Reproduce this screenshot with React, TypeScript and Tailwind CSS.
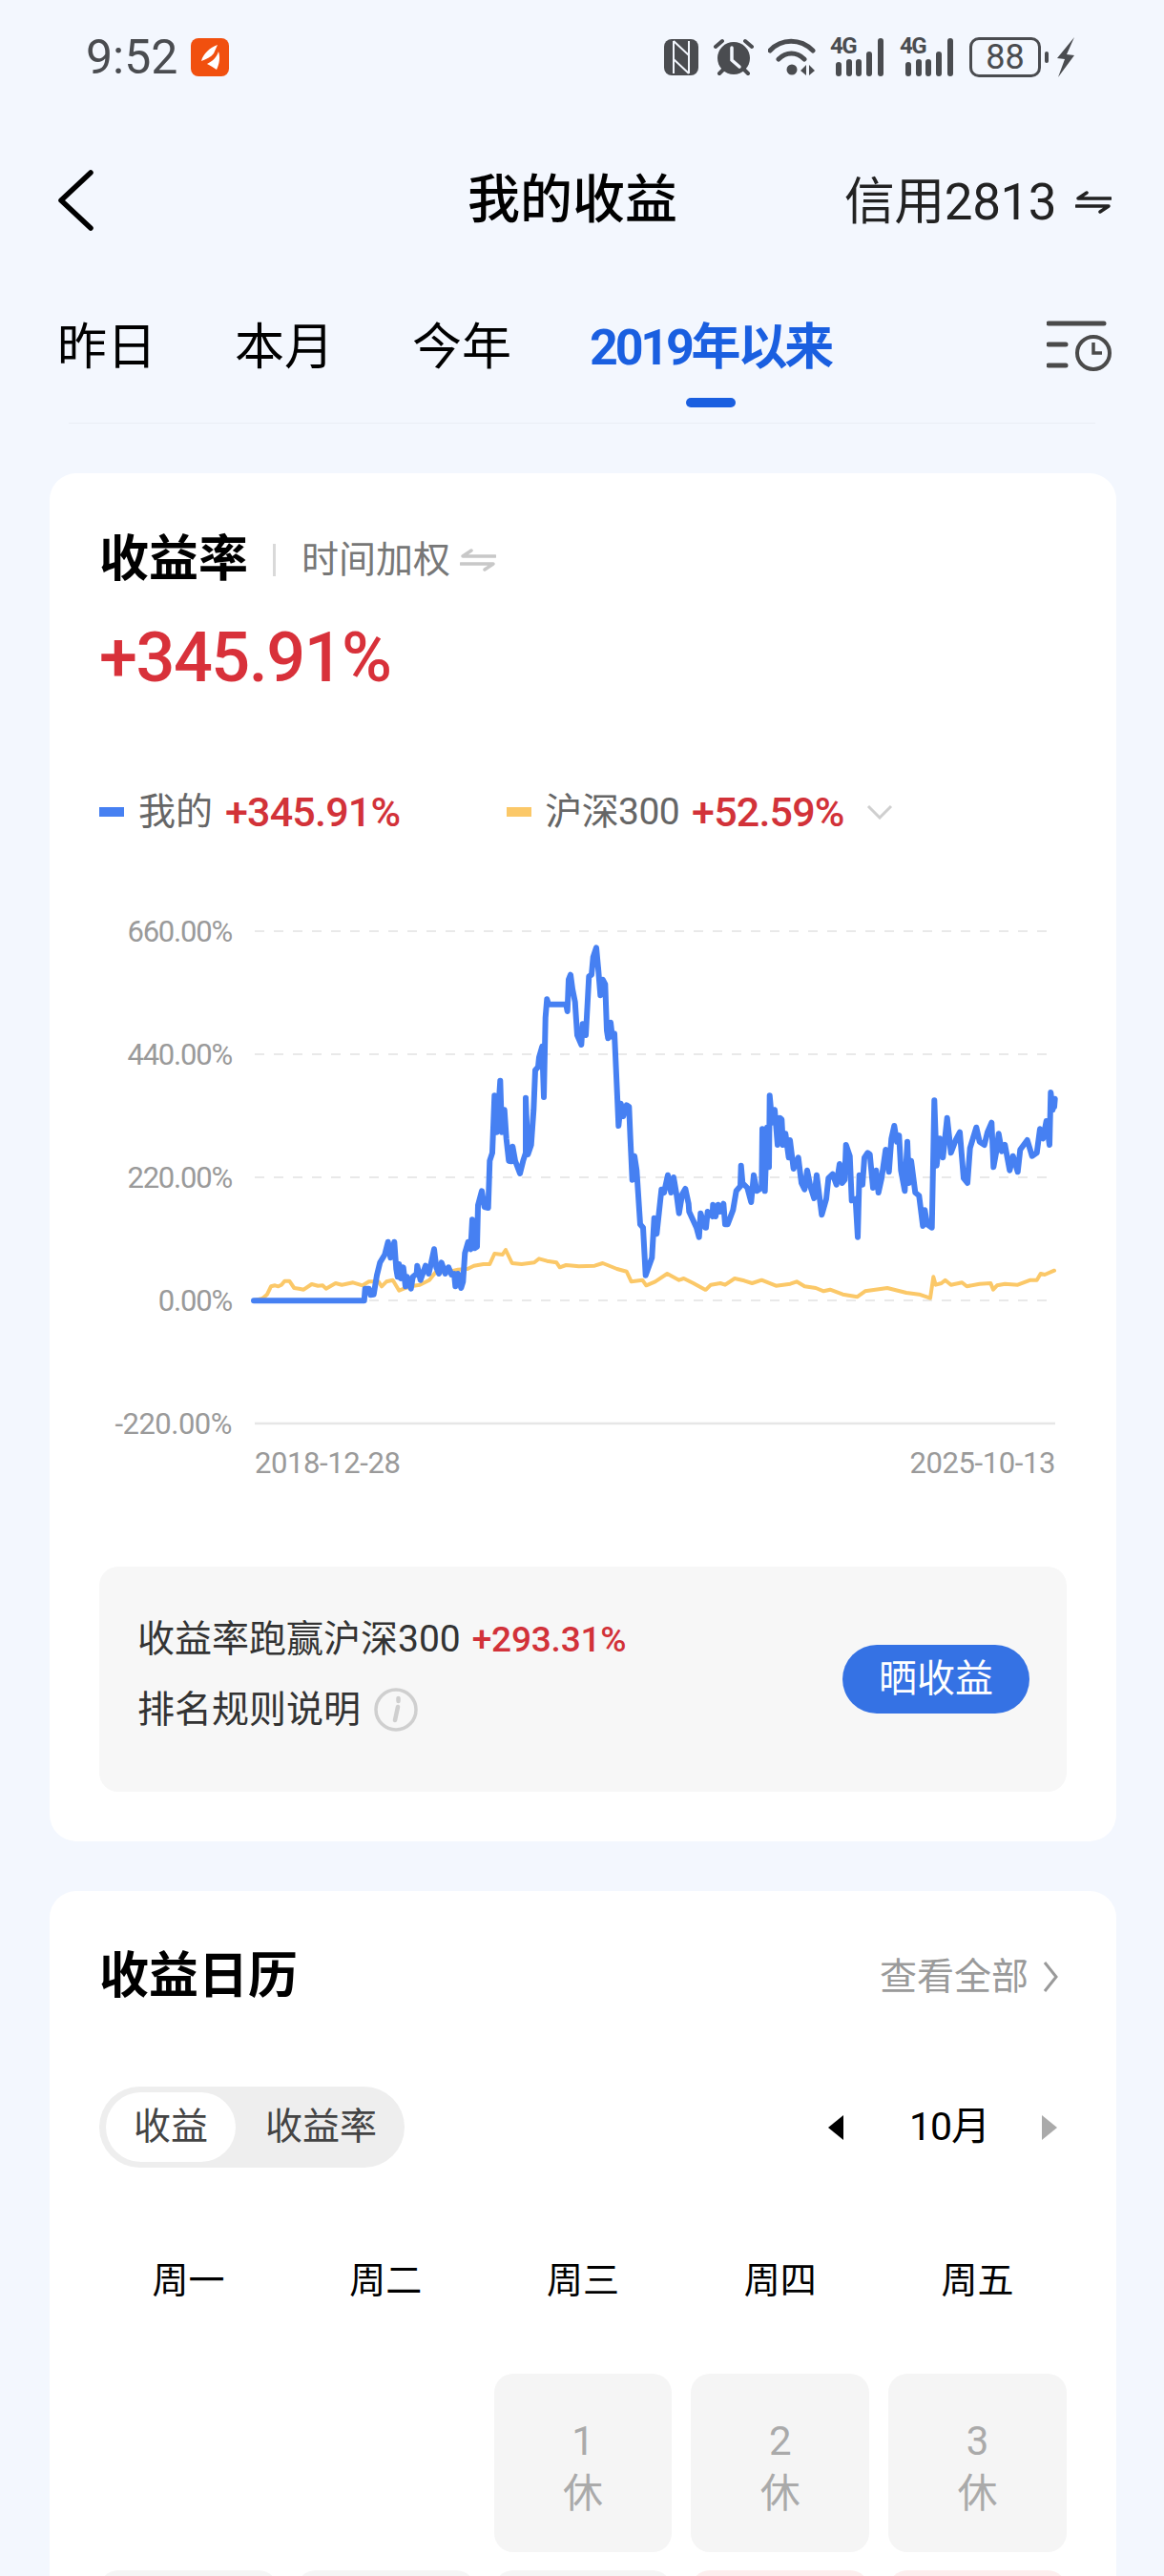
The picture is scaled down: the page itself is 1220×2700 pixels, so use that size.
import React from 'react';

// traced from the reference, [x, y] in crop pixels; see toPoints
const blueA = [[78,1210],[425,1210],[428,1172],[440,1172],[445,1192],[455,1190],[465,1130],[475,1090],[490,1065],[500,1025],[508,1075],[520,1025],[526,1110],[530,1135],[535,1095],[540,1140],[548,1105],[555,1165],[560,1135],[572,1172],[578,1135],[590,1125],[592,1100],[602,1145],[618,1100],[628,1125],[636,1090],[645,1048],[652,1105],[660,1125],[668,1090],[680,1125],[690,1105],[700,1128],[708,1125],[712,1165],[720,1125],[730,1170],[736,1150],[742,1060],[752,1025],[760,1048],[765,955],[772,1045],[780,1040],[783,910],[795,865],[803,915],[815,918],[820,770],[828,745],[835,565],[842,680],[853,518],[858,680],[866,610],[872,700],[880,770],[888,772],[892,725],[900,770],[915,810],[925,770],[933,745],[933,572],[940,750],[950,720],[958,610],[963,485],[972,475],[975,445],[985,410],[990,570],[995,320],[1000,262],[1005,278],[1060,278],[1064,300],[1068,200],[1074,185],[1080,230],[1088,270],[1095,375],[1108,405],[1112,340],[1122,375],[1132,190],[1140,185],[1145,130],[1155,100],[1162,175],[1168,250],[1175,200],[1183,215],[1188,360],[1192,385],[1200,335],[1205,380],[1212,370],[1215,435],[1222,590],[1225,660],[1232,590],[1240,630],[1250,595],[1258,600],[1262,700],[1268,830],[1275,755],[1282,800],[1293,970],[1302,980],[1310,1130],[1330,1075],[1337,950],[1345,1000],[1360,860],[1368,870],[1380,815],[1390,870],[1398,822],[1408,880],[1415,935],[1425,875],[1435,858],[1445,905],[1447,930],[1470,980],[1478,1010],[1483,935],[1497,980]];
const blueB = [[120,620],[125,570],[140,585],[142,548],[150,585],[158,548],[165,570],[175,545],[180,610],[188,610],[205,565],[215,505],[228,490],[230,425],[235,480],[250,495],[262,540],[270,455],[280,505],[295,495],[297,310],[305,505],[312,305],[318,430],[320,205],[328,290],[336,250],[345,360],[352,275],[358,280],[362,360],[370,325],[380,400],[384,345],[395,435],[410,400],[420,480],[430,500],[438,440],[448,490],[460,528],[468,455],[484,580],[498,530],[505,465],[518,452],[530,485],[540,420],[548,480],[556,470],[560,360],[572,395],[578,535],[590,530],[597,650],[602,455],[612,485],[618,400],[628,385],[635,390],[645,495],[655,440],[662,510],[672,465],[685,375],[695,445],[703,340],[712,300],[720,350],[727,330],[733,440],[745,505],[753,350],[758,480],[765,410],[778,510],[790,520],[802,615],[808,565],[815,610],[830,620],[838,220],[845,425],[855,340],[865,400],[878,275],[890,385],[905,345],[918,320],[930,465],[942,480],[950,370],[970,305],[980,350],[995,360],[1005,320],[1018,290],[1024,430],[1033,380],[1040,325],[1050,380],[1060,360],[1075,440],[1085,395],[1100,445],[1108,375],[1130,345],[1145,395],[1160,385],[1170,310],[1180,340],[1190,285],[1200,360],[1204,195],[1210,250],[1217,215],[1215,240]];
const orangeA = [[78,1210],[105,1203],[120,1190],[132,1165],[145,1162],[155,1165],[165,1160],[175,1148],[190,1148],[205,1170],[220,1172],[235,1175],[260,1158],[280,1163],[295,1162],[305,1172],[335,1155],[355,1160],[390,1153],[420,1162],[440,1150],[470,1150],[480,1165],[495,1150],[515,1145],[535,1178],[555,1170],[570,1165],[600,1160],[630,1145],[650,1120],[690,1120],[720,1112],[750,1110],[770,1100],[800,1095],[820,1095],[835,1062],[860,1065],[870,1050],[890,1092],[920,1095],[960,1090],[975,1078],[1000,1085],[1030,1090],[1040,1105],[1060,1098],[1085,1100],[1100,1102],[1150,1100],[1175,1092],[1220,1110],[1250,1118],[1265,1150],[1300,1145],[1312,1162],[1340,1150],[1378,1125],[1415,1145],[1430,1140],[1460,1155],[1497,1175]];
const orangeB = [[120,815],[135,800],[165,795],[180,800],[210,780],[240,787],[265,795],[295,785],[340,803],[385,797],[405,790],[430,805],[465,810],[490,820],[510,815],[550,830],[595,838],[620,820],[690,810],[750,825],[790,830],[825,842],[835,775],[842,800],[860,795],[872,785],[890,800],[925,793],[940,805],[980,797],[1015,795],[1023,815],[1035,802],[1060,797],[1100,800],[1140,785],[1160,785],[1172,765],[1185,768],[1215,755]];

const toPoints = (a: number[][], b: number[][]) =>
    [
        ...a.map(([x, y]) => [240 + x / 3, 960 + y / 3]),
        ...b.map(([x, y]) => [700 + x / 3, 1080 + y / 3]),
    ]
        .map(([x, y]) => `${x.toFixed(1)},${y.toFixed(1)}`)
        .join(' ');

const gridLines = [
    { y: 976, label: '660.00%' },
    { y: 1105, label: '440.00%' },
    { y: 1234, label: '220.00%' },
    { y: 1363, label: '0.00%' },
];

const StatusIcons = () => (
    <div className="flex items-center">
        <svg width="36" height="38" viewBox="0 0 36 38" className="mr-[16px]">
            <rect width="36" height="38" rx="8" fill="#4a4c50" />
            <path d="M10 2v34M26 2v34M10 2l16 15v-6M26 36L10 21v6" fill="none" stroke="#f3f7fe" strokeWidth="2" />
        </svg>
        <svg width="42" height="40" viewBox="0 0 42 40" className="mr-[15px]">
            <circle cx="21" cy="21" r="17" fill="#4a4c50" />
            <path d="M2 9l7-6M40 9l-7-6M6 37l4-4M36 37l-4-4" stroke="#4a4c50" strokeWidth="4" strokeLinecap="round" />
            <path d="M19 10v13l8 7" fill="none" stroke="#f3f7fe" strokeWidth="3.5" strokeLinecap="round" />
        </svg>
        <svg width="50" height="40" viewBox="0 0 50 40" className="mr-[15px]">
            <path d="M2 13C14 0 34 0 47 13M11 22C19 14 30 14 38 22" fill="none" stroke="#4a4c50" strokeWidth="5" strokeLinecap="round" />
            <circle cx="25" cy="33" r="5.5" fill="#4a4c50" />
            <path d="M40 28v11l-6-5zM43 28v11l6-5z" fill="#4a4c50" />
        </svg>
        <Signal />
        <div className="w-[16px]" />
        <Signal />
        <div className="ml-[16px] flex h-[42px] w-[75px] items-center justify-center rounded-[10px] border-[3px] border-[#4a4c50] text-[36px] leading-none text-[#4a4c50]">88</div>
        <div className="ml-[4px] h-[12px] w-[4px] rounded-full bg-[#4a4c50]" />
        <svg width="20" height="42" viewBox="0 0 20 42" className="ml-[8px]">
            <path d="M19 0L1 22l8 1-7 19 17-23-8-1z" fill="#4a4c50" />
        </svg>
    </div>
);

const Signal = () => (
    <div className="relative h-[40px] w-[57px]">
        <span className="absolute top-[-4px] left-0 text-[24px] leading-[24px] font-bold tracking-[-1.5px] text-[#4a4c50]">4G</span>
        <svg width="57" height="40" viewBox="0 0 57 40" className="absolute inset-0">
            <path d="M9 28v9M20 25v12M30 25v12M41 17v20M53 3v34" stroke="#4a4c50" strokeWidth="6" strokeLinecap="round" />
        </svg>
    </div>
);

const SwapIcon = ({ color, width }: { color: string; width: number }) => (
    <svg width={width} height="24" viewBox="0 0 38 24">
        <path d="M37 8H3l9-6M1 16h34l-9 6" fill="none" stroke={color} strokeWidth="3.5" strokeLinecap="round" strokeLinejoin="round" />
    </svg>
);

const Chart = () => (
    <svg width="1014" height="610" viewBox="104 950 1014 610" className="mt-[74px] block">
        {gridLines.map(g => (
            <g key={g.y}>
                <line x1="267" x2="1106" y1={g.y} y2={g.y} stroke="#e9e9e9" strokeWidth="2" strokeDasharray="10 10" />
                <text x="243" y={g.y + 11} textAnchor="end" fontSize="31" letterSpacing="-1.2" fill="#9a9a9a">{g.label}</text>
            </g>
        ))}
        <line x1="267" x2="1106" y1="1492" y2="1492" stroke="#e6e6e6" strokeWidth="2.5" />
        <text x="243" y="1503" textAnchor="end" fontSize="31" letterSpacing="-0.5" fill="#9a9a9a">-220.00%</text>
        <text x="267" y="1544" fontSize="31" letterSpacing="-0.4" fill="#9a9a9a">2018-12-28</text>
        <text x="1106" y="1544" textAnchor="end" fontSize="31" letterSpacing="-0.4" fill="#9a9a9a">2025-10-13</text>
        <polyline points={toPoints(orangeA, orangeB)} fill="none" stroke="#fbc868" strokeWidth="4" strokeLinejoin="round" strokeLinecap="round" />
        <polyline points={toPoints(blueA, blueB)} fill="none" stroke="#4680f2" strokeWidth="6" strokeLinejoin="round" strokeLinecap="round" />
    </svg>
);

const weekdays = ['周一', '周二', '周三', '周四', '周五'];

const firstWeek = [null, null, '1', '2', '3'];
const secondWeek = ['bg-[#f5f5f5]', 'bg-[#f5f5f5]', 'bg-[#f5f5f5]', 'bg-[#fdeeee]', 'bg-[#fdeeee]'];

export default function App() {
    return (
        <div className="h-[2700px] w-[1220px] overflow-hidden bg-[#f3f7fe] font-['Roboto','Noto_Sans_CJK_SC',sans-serif]">
            {/* status bar */}
            <div className="flex h-[120px] items-center justify-between pr-[93px] pl-[90px]">
                <div className="flex items-center">
                    <span className="text-[50px] leading-none text-[#4a4c50]">9:52</span>
                    <div className="ml-[14px] flex h-[40px] w-[40px] items-center justify-center rounded-[8px] bg-[#f1500f]">
                        <svg width="24" height="28" viewBox="0 0 24 28">
                            <path d="M20 1C12 4 5 10 3 18c5-2 10-4 13-8zM21 8c-2 6-6 10-12 13 4 2 7 4 10 6 3-6 4-13 2-19z" fill="#fff" />
                        </svg>
                    </div>
                </div>
                <StatusIcons />
            </div>

            {/* title bar */}
            <div className="relative flex h-[180px] items-center justify-between pr-[55px] pl-[60px]">
                <svg width="38" height="64" viewBox="0 0 38 64">
                    <path d="M35 3L4 32l31 29" fill="none" stroke="#000" strokeWidth="5.5" strokeLinecap="round" strokeLinejoin="round" />
                </svg>
                <div className="absolute top-[62px] left-[490px] text-[55px] leading-none font-medium text-black">我的收益</div>
                <div className="flex items-center pt-[4px] text-[#222]">
                    <span className="text-[53px] leading-none tracking-[-0.5px]">信用2813</span>
                    <div className="ml-[20px]"><SwapIcon color="#222" width={38} /></div>
                </div>
            </div>

            {/* period tabs */}
            <div className="flex justify-between pt-[30px] pr-[55px] pl-[60px]">
                <div className="flex gap-[82px]">
                    {['昨日', '本月', '今年'].map(t => (
                        <div key={t} className="flex h-[70px] items-center text-[52px] leading-none text-black">{t}</div>
                    ))}
                    <div className="flex flex-col items-center">
                        <div className="flex h-[70px] items-center text-[52px] leading-none font-bold tracking-[-3.2px] text-[#1a5fe0]">2019年以来</div>
                        <div className="mt-[17px] h-[10px] w-[52px] rounded-full bg-[#1a5fe0]" />
                    </div>
                </div>
                <svg width="68" height="54" viewBox="0 0 68 54" className="mt-[6px]">
                    <path d="M2 3h58M2 25h18M2 47h18" stroke="#4a4a4a" strokeWidth="5" strokeLinecap="round" />
                    <circle cx="49" cy="34" r="17" fill="none" stroke="#4a4a4a" strokeWidth="4" />
                    <path d="M49 23v11h9" fill="none" stroke="#4a4a4a" strokeWidth="3.5" />
                </svg>
            </div>
            <div className="mx-[72px] mt-[16px] h-[1px] bg-[#e9edf5]" />

            {/* return card */}
            <div className="mt-[52px] mr-[50px] ml-[52px] rounded-[28px] bg-white pt-[62px] pr-[52px] pb-[52px] pl-[52px]">
                <div className="flex h-[58px] items-center">
                    <span className="mr-[26px] text-[52px] leading-none font-bold text-black">收益率</span>
                    <div className="h-[34px] w-[3px] bg-[#d9d9d9]" />
                    <span className="ml-[27px] text-[39px] leading-none text-[#777]">时间加权</span>
                    <div className="ml-[10px]"><SwapIcon color="#c8c8c8" width={38} /></div>
                </div>
                <div className="mt-[29px] flex h-[90px] items-center text-[72px] leading-none font-medium tracking-[-1.5px] text-[#d8313a]">+345.91%</div>
                <div className="mt-[91px] flex h-[50px] items-center">
                    <div className="h-[10px] w-[26px] bg-[#4680f2]" />
                    <span className="ml-[15px] text-[39px] leading-none text-[#666]">我的</span>
                    <span className="ml-[13px] text-[43px] leading-none font-medium tracking-[-0.8px] text-[#d23239]">+345.91%</span>
                    <div className="ml-[112px] h-[10px] w-[26px] bg-[#fbc868]" />
                    <span className="ml-[14px] text-[39px] leading-none tracking-[-0.6px] text-[#666]">沪深300</span>
                    <span className="ml-[13px] text-[43px] leading-none font-medium tracking-[-0.8px] text-[#d23239]">+52.59%</span>
                    <svg width="28" height="16" viewBox="0 0 28 16" className="ml-[23px]">
                        <path d="M2 2l12 12L26 2" fill="none" stroke="#cfcfcf" strokeWidth="3" />
                    </svg>
                </div>
                <Chart />
                <div className="mt-[82px] flex h-[236px] items-center justify-between rounded-[20px] bg-[#f7f7f7] pr-[39px] pl-[40px]">
                    <div className="-mt-[10px] flex flex-col gap-[22px]">
                        <div className="flex h-[52px] items-center text-[39px] leading-none text-[#333]">
                            收益率跑赢沪深300
                            <span className="ml-[12px] text-[37px] font-medium tracking-[-0.2px] text-[#d23239]">+293.31%</span>
                        </div>
                        <div className="flex h-[52px] items-center text-[39px] leading-none text-[#333]">
                            排名规则说明
                            <svg width="46" height="46" viewBox="0 0 46 46" className="ml-[14px]">
                                <circle cx="23" cy="23" r="21" fill="none" stroke="#cfcfcf" strokeWidth="3.5" />
                                <path d="M25 20l-3 14M25.5 11v3" stroke="#cfcfcf" strokeWidth="4.5" strokeLinecap="round" />
                            </svg>
                        </div>
                    </div>
                    <div className="flex h-[72px] w-[196px] items-center justify-center rounded-full bg-[#3572e4] text-[40px] leading-none text-white">晒收益</div>
                </div>
            </div>

            {/* calendar card */}
            <div className="mt-[52px] mr-[50px] ml-[52px] rounded-t-[28px] bg-white pt-[60px] pr-[52px] pl-[52px]">
                <div className="flex h-[60px] items-center justify-between">
                    <span className="text-[52px] leading-none font-bold text-black">收益日历</span>
                    <div className="flex items-center text-[39px] leading-none text-[#9a9a9a]">
                        查看全部
                        <svg width="16" height="34" viewBox="0 0 16 34" className="mr-[9px] ml-[15px]">
                            <path d="M2 2l12 15L2 32" fill="none" stroke="#9a9a9a" strokeWidth="3" />
                        </svg>
                    </div>
                </div>
                <div className="mt-[85px] flex items-center justify-between">
                    <div className="flex h-[85px] w-[320px] items-center rounded-full bg-[#eeeeee] pl-[7px] text-[39px] leading-none text-[#444]">
                        <div className="flex h-[73px] w-[136px] items-center justify-center rounded-full bg-white">收益</div>
                        <div className="ml-[31px]">收益率</div>
                    </div>
                    <div className="flex items-center">
                        <div className="h-0 w-0 border-y-[13px] border-r-[16px] border-y-transparent border-r-black" />
                        <span className="mr-[55px] ml-[69px] text-[41px] leading-none tracking-[-1px] text-black">10月</span>
                        <div className="mr-[10px] h-0 w-0 border-y-[13px] border-l-[16px] border-y-transparent border-l-[#aaaaaa]" />
                    </div>
                </div>
                <div className="mt-[93px] grid h-[50px] grid-cols-5 gap-x-[20px]">
                    {weekdays.map(d => (
                        <div key={d} className="flex items-center justify-center text-[38px] leading-none text-black">{d}</div>
                    ))}
                </div>
                <div className="mt-[73px] grid grid-cols-5 gap-x-[20px] gap-y-[19px]">
                    {firstWeek.map((d, i) =>
                        d ? (
                            <div key={i} className="flex h-[187px] flex-col items-center justify-center gap-[13px] rounded-[20px] bg-[#f5f5f5] pt-[10px] text-[42px] leading-[42px] text-[#aaaaaa]">
                                <span>{d}</span>
                                <span>休</span>
                            </div>
                        ) : (
                            <div key={i} className="h-[187px]" />
                        ),
                    )}
                    {secondWeek.map((bg, i) => (
                        <div key={i} className={`h-[187px] rounded-[20px] ${bg}`} />
                    ))}
                </div>
            </div>
        </div>
    );
}
